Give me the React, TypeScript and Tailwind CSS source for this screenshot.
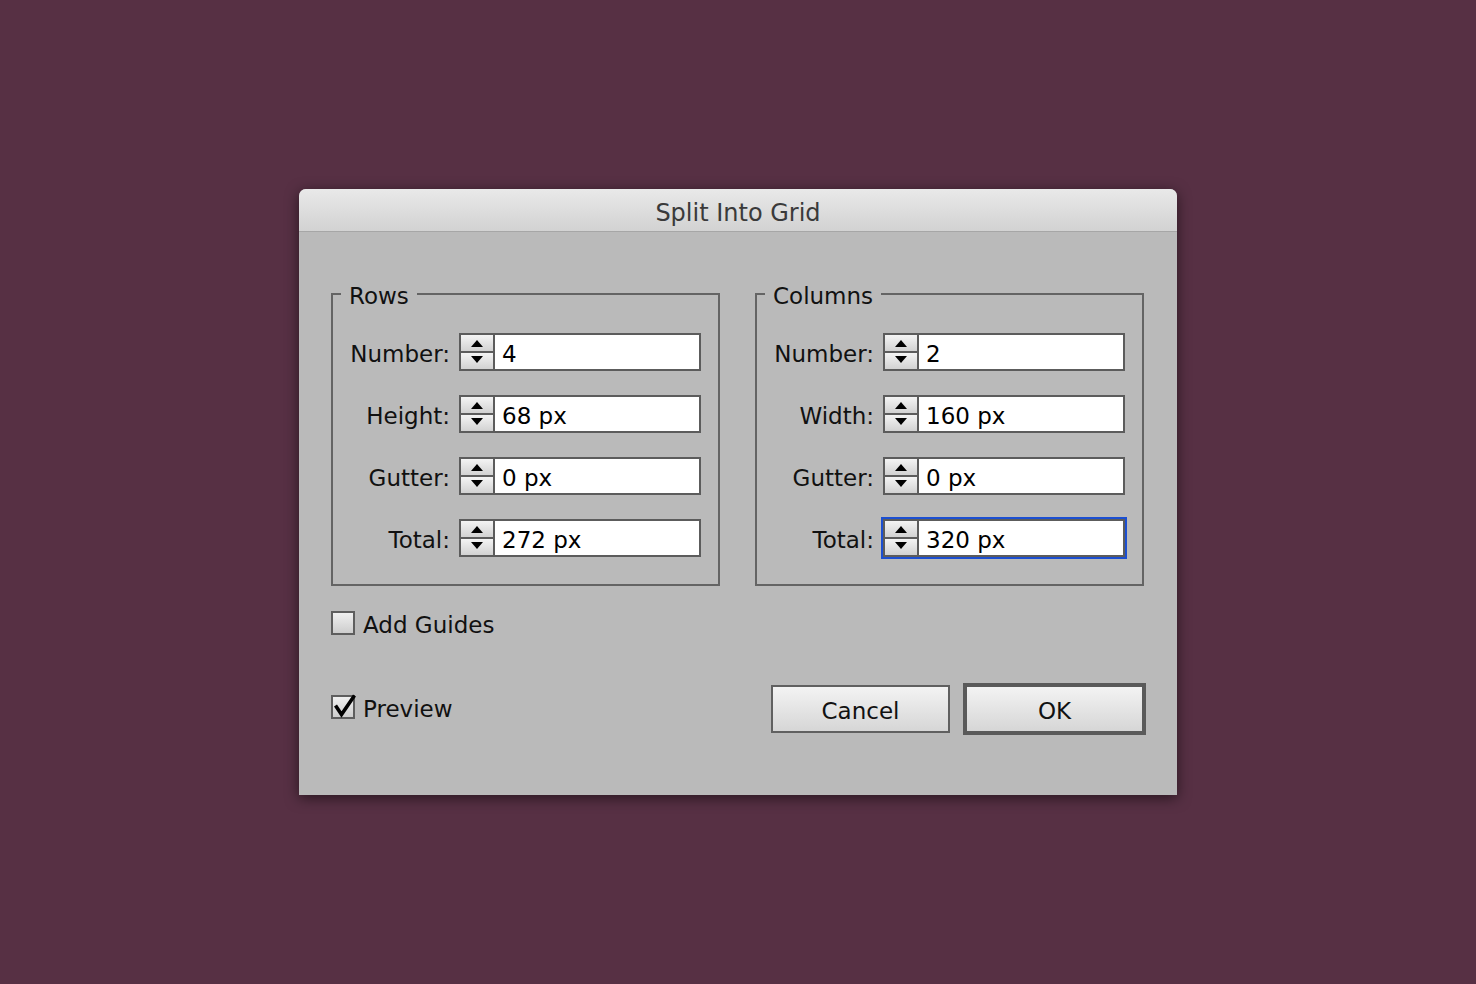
import React from "react";

const FONT = { fontFamily: '"DejaVu Sans", "Liberation Sans", sans-serif' };

function Spinner() {
  return (
    <div className="flex h-full w-[34px] flex-col border-r-2 border-[#5c5c5c]">
      <div className="flex h-[16px] items-end justify-center bg-gradient-to-b from-[#f4f4f4] to-[#d2d2d2] pb-[4px]">
        <svg width="12" height="7" viewBox="0 0 12 7">
          <polygon points="6,0 12,7 0,7" fill="#000" />
        </svg>
      </div>
      <div className="h-[2px] bg-[#5c5c5c]" />
      <div className="flex h-[16px] items-start justify-center bg-gradient-to-b from-[#f4f4f4] to-[#d2d2d2] pt-[3px]">
        <svg width="12" height="7" viewBox="0 0 12 7">
          <polygon points="0,0 12,0 6,7" fill="#000" />
        </svg>
      </div>
    </div>
  );
}

function Field({ label, value, focused }: { label: string; value: string; focused?: boolean }) {
  return (
    <div className="flex h-[38px] items-center">
      <div className="w-[117px] pt-[4px] text-right text-[23px] leading-none text-[#111]">{label}</div>
      <div
        className={
          "ml-[9px] flex h-[38px] w-[242px] border-2 border-[#5c5c5c] bg-white" +
          (focused ? " ring-2 ring-[#1c4fd1]" : "")
        }
      >
        <Spinner />
        <div className="flex flex-1 items-center pl-[7px] pt-[4px] text-[23px] leading-none text-black">{value}</div>
      </div>
    </div>
  );
}

function Group({ title, fields }: { title: string; fields: [string, string, boolean?][] }) {
  return (
    <fieldset className="w-[389px] border-2 border-[#646464] pb-[27px] pt-[25px]">
      <legend className="ml-[8px] px-[8px] text-[23px] leading-[28px] text-[#111]">
        <span className="relative top-[2px]">{title}</span>
      </legend>
      <div className="flex flex-col gap-[24px]">
        {fields.map(([l, v, f]) => (
          <Field key={l} label={l} value={v} focused={f} />
        ))}
      </div>
    </fieldset>
  );
}

function Checkbox({ checked, label }: { checked?: boolean; label: string }) {
  return (
    <div className="flex h-[24px] items-center">
      <div className="relative h-[24px] w-[24px] border-2 border-[#5e5e5e] bg-gradient-to-b from-[#f0f0f0] to-[#cdcdcd]">
        {checked && (
          <svg className="absolute left-[-2px] top-[-2px] overflow-visible" width="24" height="24" viewBox="0 0 24 24">
            <path d="M4.5 10.5 L10.5 19.5 L23.5 0.5" fill="none" stroke="#000" strokeWidth="3.6" strokeLinejoin="miter" />
          </svg>
        )}
      </div>
      <span className="ml-[8px] pt-[4px] text-[23px] leading-none text-[#111]">{label}</span>
    </div>
  );
}

export default function App() {
  return (
    <div className="flex h-[984px] w-full items-center justify-center bg-[#573044]" style={FONT}>
      <div className="flex w-[878px] flex-col rounded-t-[7px] bg-[#bababa] shadow-[0_3px_14px_rgba(0,0,0,0.55)]">
        <div className="flex h-[43px] items-center justify-center rounded-t-[7px] border-b border-[#a6a6a6] bg-gradient-to-b from-[#e9e9e9] to-[#d2d2d2] pt-[5px] text-[24px] text-[#3a3a3a]">
          Split Into Grid
        </div>
        <div className="flex flex-col pb-[60px] pl-[32px] pr-[33px] pt-[48px]">
          <div className="flex gap-[35px]">
            <Group
              title="Rows"
              fields={[
                ["Number:", "4"],
                ["Height:", "68 px"],
                ["Gutter:", "0 px"],
                ["Total:", "272 px"],
              ]}
            />
            <Group
              title="Columns"
              fields={[
                ["Number:", "2"],
                ["Width:", "160 px"],
                ["Gutter:", "0 px"],
                ["Total:", "320 px", true],
              ]}
            />
          </div>
          <div className="mt-[25px]">
            <Checkbox label="Add Guides" />
          </div>
          <div className="mt-[48px] flex items-start justify-between">
            <div className="mt-[12px]">
              <Checkbox checked label="Preview" />
            </div>
            <div className="mr-[-2px] flex items-center gap-[13px]">
              <button className="h-[48px] w-[179px] border-2 border-[#606060] bg-gradient-to-b from-[#f3f3f3] to-[#d6d6d6] pt-[4px] text-[23px] leading-none text-[#111]">
                Cancel
              </button>
              <button className="h-[52px] w-[183px] border-4 border-[#5a5a5a] bg-gradient-to-b from-[#f3f3f3] to-[#d6d6d6] pt-[4px] text-[23px] leading-none text-[#111]">
                OK
              </button>
            </div>
          </div>
        </div>
      </div>
    </div>
  );
}
